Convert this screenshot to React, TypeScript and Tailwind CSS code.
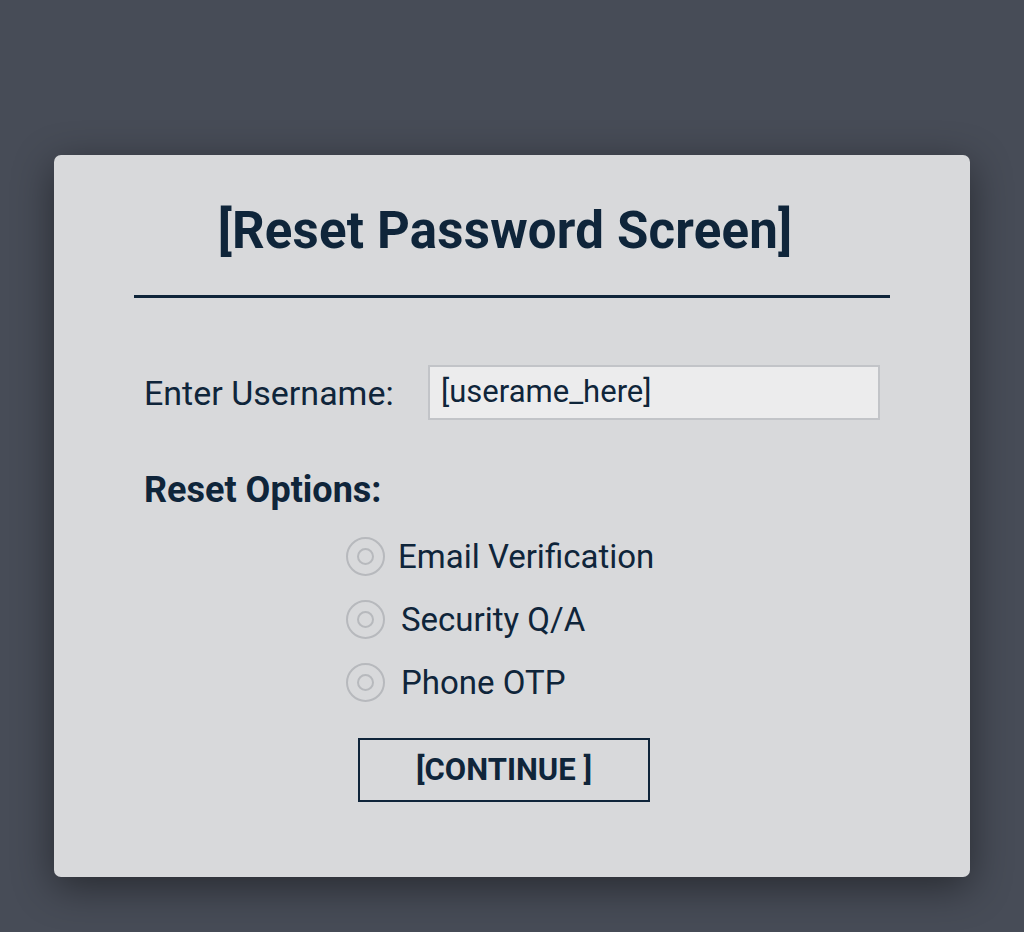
import { useState } from 'react';

const options = ['Email Verification', 'Security Q/A', 'Phone OTP'];

const App = () => {
  const [selected, setSelected] = useState<string | null>(null);

  return (
    <div className="min-h-[932px] w-full bg-[#474c57] pt-[155px] font-['Roboto',sans-serif] text-[#0f253a]">
      <div className="mx-[54px] h-[722px] rounded-[7px] bg-[#d8d9db] px-[80px] pt-[44px] shadow-[0_10px_40px_rgba(0,0,0,0.45)]">
        <h1 className="pr-[14px] text-center text-[51px] leading-[64px] font-bold tracking-[0.2px]">[Reset Password Screen]</h1>
        <div className="mt-[32px] h-[3px] w-full bg-[#0f253a]" />

        <div className="mt-[67px] flex items-center pl-[10px]">
          <label className="w-[284px] text-[34px] leading-none">Enter Username:</label>
          <div className="flex h-[55px] w-[452px] items-center border-2 border-[#c2c4c8] bg-[#ececed] pl-[11px] text-[31px]">
            [userame_here]
          </div>
        </div>

        <div className="mt-[52px] pl-[10px] text-[36px] leading-none font-bold">Reset Options:</div>

        <div className="mt-[28px] flex flex-col gap-[23px] pl-[212px]">
          {options.map((opt, i) => (
            <button
              key={opt}
              onClick={() => setSelected(opt)}
              className="flex h-[40px] items-center text-left"
            >
              <span className="flex h-[39px] w-[39px] items-center justify-center rounded-full border-2 border-[#b7b9bd]">
                <span
                  className={`h-[17px] w-[17px] rounded-full border-2 border-[#b7b9bd] ${selected === opt ? 'bg-[#0f253a]' : ''}`}
                />
              </span>
              <span className={`text-[33px] leading-none ${i === 0 ? 'ml-[13px]' : 'ml-[16px]'}`}>{opt}</span>
            </button>
          ))}
        </div>

        <div className="mt-[36px] flex justify-center pr-[16px]">
          <button className="h-[64px] w-[292px] border-2 border-[#0f253a] text-[31px] font-bold">[CONTINUE ]</button>
        </div>
      </div>
    </div>
  );
};

export default App;
